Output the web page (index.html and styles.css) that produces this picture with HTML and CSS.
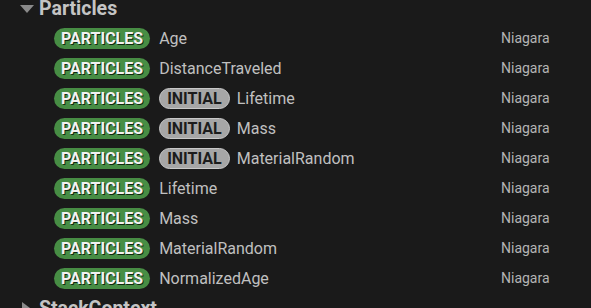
FILE: index.html
```html
<!DOCTYPE html>
<html>
<head>
<meta charset="utf-8">
<link rel="stylesheet" href="styles.css">
</head>
<body>
<div class="tree">
  <div class="header">
    <span class="tri-down"></span>
    <span class="title">Particles</span>
  </div>
  <div class="row"><span class="pill green">PARTICLES</span><span class="name">Age</span><span class="src">Niagara</span></div>
  <div class="row"><span class="pill green">PARTICLES</span><span class="name">DistanceTraveled</span><span class="src">Niagara</span></div>
  <div class="row"><span class="pill green">PARTICLES</span><span class="pill grey">INITIAL</span><span class="name">Lifetime</span><span class="src">Niagara</span></div>
  <div class="row"><span class="pill green">PARTICLES</span><span class="pill grey">INITIAL</span><span class="name">Mass</span><span class="src">Niagara</span></div>
  <div class="row"><span class="pill green">PARTICLES</span><span class="pill grey">INITIAL</span><span class="name">MaterialRandom</span><span class="src">Niagara</span></div>
  <div class="row"><span class="pill green">PARTICLES</span><span class="name">Lifetime</span><span class="src">Niagara</span></div>
  <div class="row"><span class="pill green">PARTICLES</span><span class="name">Mass</span><span class="src">Niagara</span></div>
  <div class="row"><span class="pill green">PARTICLES</span><span class="name">MaterialRandom</span><span class="src">Niagara</span></div>
  <div class="row"><span class="pill green">PARTICLES</span><span class="name">NormalizedAge</span><span class="src">Niagara</span></div>
  <div class="header">
    <span class="tri-right"></span>
    <span class="title">StackContext</span>
  </div>
</div>
</body>
</html>
```
FILE: styles.css
```css
html, body {
  margin: 0;
  padding: 0;
  background: #1a1a1a;
  overflow: hidden;
}
body {
  width: 591px;
  height: 308px;
  font-family: Roboto, "Liberation Sans", sans-serif;
}
.tree {
  display: flex;
  flex-direction: column;
  margin-top: -7px;
}
.header {
  height: 30px;
  display: flex;
  align-items: center;
  padding-left: 20px;
  color: #c4c4c4;
}
.header .title {
  font-size: 19.5px;
  font-weight: bold;
  margin-left: 5px;
}
.tri-down {
  width: 0;
  height: 0;
  border-left: 7px solid transparent;
  border-right: 7px solid transparent;
  border-top: 8px solid #8a8a8a;
  margin-top: 2px;
}
.tri-right {
  width: 0;
  height: 0;
  border-top: 6px solid transparent;
  border-bottom: 6px solid transparent;
  border-left: 8px solid #8a8a8a;
  margin-left: 2px;
  margin-right: 4px;
}
.row {
  height: 30px;
  display: flex;
  align-items: center;
  padding-left: 54px;
  position: relative;
}
.pill {
  height: 21px;
  line-height: 21px;
  border-radius: 11px;
  font-size: 16px;
  font-weight: bold;
  box-sizing: border-box;
  margin-right: 9px;
}
.pill.green {
  background: #478d44;
  color: #f2f2f2;
  padding: 0 7px;
  text-shadow: 1px 1px 0 #0f2a0f;
}
.pill.grey {
  background: #a6a6a6;
  color: #1c1c1c;
  border: 1px solid #c8c8c8;
  line-height: 19px;
  padding: 0 7px;
  margin-right: 7px;
}
.name {
  color: #c0c0c0;
  font-size: 16px;
}
.src {
  position: absolute;
  left: 501px;
  color: #b4b4b4;
  font-size: 14px;
}
```
